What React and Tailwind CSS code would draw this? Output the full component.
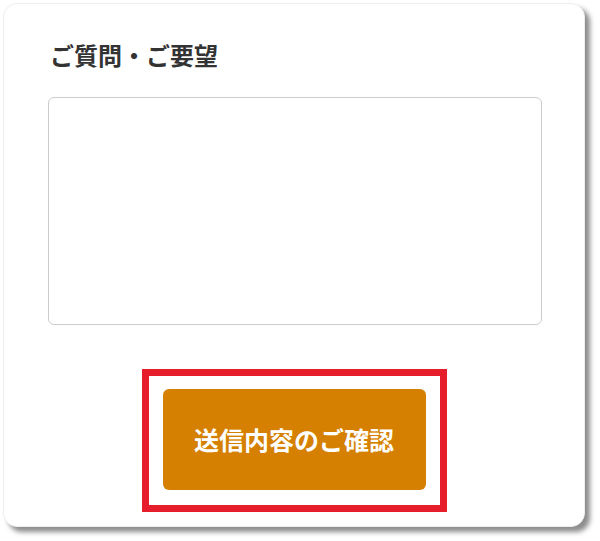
export default function App() {
  return (
    <div className="w-[600px] h-[541px] bg-white pt-[3px] pl-[3px]" style={{ fontFamily: '"Noto Sans CJK JP", "Noto Sans", sans-serif' }}>
      <div className="w-[582px] h-[524px] rounded-[14px] bg-white border border-[#eeeeee] shadow-[5px_5px_5px_rgba(0,0,0,0.45)] pt-[35px] px-[44px] flex flex-col">
        <h2 className="text-[24px] leading-[32px] font-bold text-[#333333] pl-[2px]">ご質問・ご要望</h2>
        <textarea className="mt-[26px] w-[494px] h-[228px] border border-[#cccccc] rounded-[6px] resize-none outline-none" />
        <div className="mt-[44px] self-center border-[7px] border-[#e61e2b] px-[14px] pt-[13px] pb-[15px]">
          <button className="w-[263px] h-[101px] rounded-[6px] bg-[#d58000] text-white text-[25px] font-bold">
            送信内容のご確認
          </button>
        </div>
      </div>
    </div>
  );
}
